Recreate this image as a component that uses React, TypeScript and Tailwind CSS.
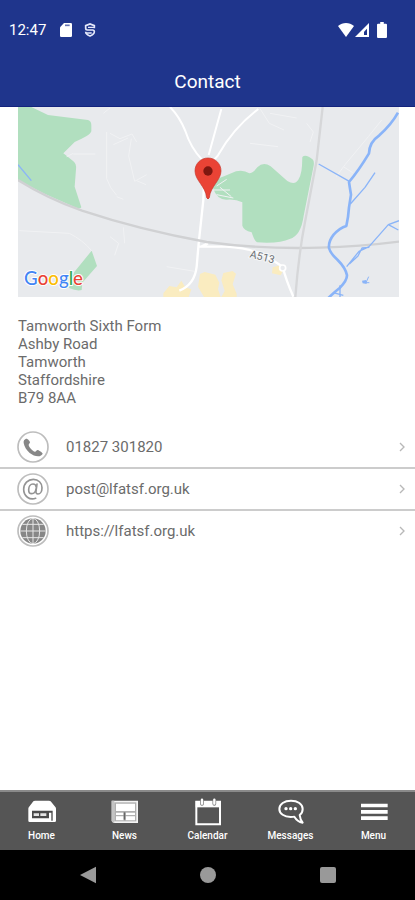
import type { ReactNode } from "react";

const ADDRESS = ["Tamworth Sixth Form", "Ashby Road", "Tamworth", "Staffordshire", "B79 8AA"];

interface ContactItem {
  label: string;
  href: string;
  icon: ReactNode;
}

interface TabItem {
  label: string;
  icon: ReactNode;
}

function PhoneIcon() {
  return (
    <svg viewBox="0 0 96 96" className="size-8 shrink-0" aria-hidden="true">
      <circle cx="48" cy="48" r="45" fill="#fff" stroke="#bdbdbd" strokeWidth="5" />
      <path
        d="M27 23c-5 2-8 6-7 13 2 12 9 22 18 30 8 6 17 10 25 10 7 0 12-4 14-8 0-3-12-11-15-11-3 0-5 5-8 5-7-1-18-13-19-20 0-3 4-5 4-8 0-4-7-12-12-11Z"
        fill="#878787"
      />
    </svg>
  );
}

function EmailIcon() {
  return (
    <svg viewBox="0 0 96 96" className="size-8 shrink-0" aria-hidden="true">
      <circle cx="48" cy="48" r="45" fill="#fff" stroke="#bdbdbd" strokeWidth="5" />
      <g fill="none" stroke="#949494" strokeWidth="5" strokeLinecap="round">
        <path d="M56 76C38 82 20 70 20 49c0-18 13-30 29-30 15 0 26 11 26 25 0 12-6 19-12 19-5 0-7-4-6-9l3-21" />
        <path d="M58 42c-1-6-5-9-10-9-8 0-13 8-13 17 0 8 3 12 9 12 7 0 12-7 13-14" />
      </g>
    </svg>
  );
}

function GlobeIcon() {
  return (
    <svg viewBox="0 0 96 96" className="size-8 shrink-0" aria-hidden="true">
      <circle cx="48" cy="48" r="45" fill="#fff" stroke="#bdbdbd" strokeWidth="5" />
      <circle cx="48" cy="48" r="38" fill="#878787" />
      <g fill="none" stroke="#e6e6e6" strokeWidth="3">
        <path d="M48 10v76M10 48h76M16 28h64M16 68h64" />
        <ellipse cx="48" cy="48" rx="20" ry="38" />
      </g>
    </svg>
  );
}

function HomeIcon() {
  return (
    <svg viewBox="83 54 84 84" className="size-7" aria-hidden="true">
      <path d="M104 62h42q3 0 5 2l14 17q2 2 2 5v36q0 4-4 4H88q-4 0-4-4V86q0-3 2-5l13-17q2-2 5-2Z" fill="#fff" />
      <path d="M95 92h62v30h-4V98h-7v17H95Z" fill="#4a4a4a" />
      <path d="M100 100h16v8h-16zM120 100h18v8h-18z" fill="#e4e4e4" />
    </svg>
  );
}

function NewsIcon() {
  return (
    <svg viewBox="332 54 84 84" className="size-7" aria-hidden="true">
      <path d="M334 62h79v67h-74l-5-6Z" fill="#f4f4f4" />
      <path d="M334 62h8v67h-3l-5-6Z" fill="#c4c4c4" />
      <path d="M342 67h66v57h-66z" fill="#b0b0b0" />
      <path d="M347 71h57v22h-57zM347 98h23v7h-23zM347 109h23v12h-23zM376 98h28v7h-28zM376 109h28v12h-28z" fill="#fff" />
      <path d="M370 97h5v22h-5z" fill="#666" />
    </svg>
  );
}

function CalendarIcon() {
  return (
    <svg viewBox="581 54 84 84" className="size-7" aria-hidden="true">
      <path d="M588 65h71v68h-71z" fill="none" stroke="#fff" strokeWidth="6" />
      <path d="M586 63h76v19h-76z" fill="#fff" />
      <g strokeLinecap="round">
        <path d="M605 62v10M642 62v10" stroke="#777" strokeWidth="11" />
        <path d="M605 59v12M642 59v12" stroke="#fff" strokeWidth="7" />
      </g>
    </svg>
  );
}

function MessagesIcon() {
  return (
    <svg viewBox="215 54 84 84" className="size-7" aria-hidden="true">
      <path
        d="M257 62c-20 0-35 10-35 25 0 14 15 24 34 24 4 0 8 0 11-1 6 10 15 16 25 18-5-6-8-14-9-23 6-4 9-11 9-18 0-15-15-25-35-25Z"
        fill="none"
        stroke="#fff"
        strokeWidth="6"
        strokeLinejoin="round"
      />
      <g fill="#fff">
        <circle cx="242" cy="86" r="5" />
        <circle cx="256" cy="86" r="5" />
        <circle cx="270" cy="86" r="5" />
      </g>
    </svg>
  );
}

function MenuIcon() {
  return (
    <svg viewBox="464 54 84 84" className="size-7" aria-hidden="true">
      <path d="M467 71h80v11h-80zM467 90h80v11h-80zM467 109h80v11h-80z" fill="#fff" />
    </svg>
  );
}

const CONTACTS: ContactItem[] = [
  { label: "01827 301820", href: "tel:01827301820", icon: <PhoneIcon /> },
  { label: "post@lfatsf.org.uk", href: "mailto:post@lfatsf.org.uk", icon: <EmailIcon /> },
  { label: "https://lfatsf.org.uk", href: "https://lfatsf.org.uk", icon: <GlobeIcon /> },
];

const TABS: TabItem[] = [
  { label: "Home", icon: <HomeIcon /> },
  { label: "News", icon: <NewsIcon /> },
  { label: "Calendar", icon: <CalendarIcon /> },
  { label: "Messages", icon: <MessagesIcon /> },
  { label: "Menu", icon: <MenuIcon /> },
];

function StatusBar() {
  return (
    <div className="flex h-15 items-center pr-7 pl-2 text-white">
      <span className="pl-px text-[15px]">12:47</span>
      {/* SD card */}
      <svg viewBox="0 0 36 42" className="ml-3.5 h-3.5 w-3" aria-hidden="true">
        <path d="M12 0h20q4 0 4 4v34q0 4-4 4H4q-4 0-4-4V13Z" fill="#fff" />
        <path d="M15 7h14" stroke="#6674b4" strokeWidth="5" />
      </svg>
      {/* Shield */}
      <svg viewBox="0 0 36 44" className="ml-3 h-4 w-3" fill="none" stroke="#e4e8fa" strokeWidth="5" aria-hidden="true">
        <path d="M31 17V9L18 4 5 9v8q0 5 5 5h16q5 0 5 5c0 6-6 10-13 13C11 37 5 33 5 27" />
        <path d="M12 14h19M5 31h18" strokeWidth="4" />
      </svg>
      <svg viewBox="0 0 48 42" className="ml-auto h-3.5 w-4" aria-hidden="true">
        <path d="M0 9C14-3 34-3 48 9L24 42Z" fill="#fff" />
      </svg>
      <svg viewBox="0 0 42 42" className="ml-px h-3.5 w-3.5" aria-hidden="true">
        <path d="M42 0v42H0Z" fill="#fff" />
        <path d="M36 17v19h-9V26Z" fill="#1f358c" />
      </svg>
      <svg viewBox="0 0 28 45" className="ml-2 h-4 w-2.5" aria-hidden="true">
        <path d="M9 0h10v5h6q3 0 3 3v34q0 3-3 3H3q-3 0-3-3V8q0-3 3-3h6Z" fill="#fff" />
      </svg>
    </div>
  );
}

function LocationMap() {
  return (
    <svg viewBox="54 21 1143 570" className="block w-full" role="img" aria-label="Map of Ashby Road, Tamworth">
      <path d="M54 21h1143v570H54z" fill="#e8eaed" />

      {/* Parks */}
      <g fill="#b1dfbf">
        <path d="M54 21h40l50 24 120 15q10 3 10 16v18q-3 12-50 32l-34 34 30 24q10 8 8 24l-4 52 20 62q-4 6-22-2L130 280 54 240Z" />
        <path d="M275 452l16 46-44 50-2 22q-14 4-38-6l16-48Z" />
        <path d="M638 262q10-28 36-34l34-14q22-6 40 6 10 0 24-18 18-18 40-3l50 44q16 10 26 4 16-14 18-50l1-26q10-10 32 8 4 6 2 18l-30 150q-8 60-42 70-28 14-98 10-8-4-16-30-24-6-28-20v-70q-20-10-46-8-30 2-43-37Z" />
      </g>

      {/* Built-up areas */}
      <g fill="#faecc0">
        <path d="M490 580l18-22 22 4 14-20 12 20 18 6-8 23h-76ZM594 560l6-38 14-6 32 8 12 24-4 20 8 23h-50ZM664 591l10-18-10-32 6-22 28-6 10 8-10 32 12 28v10Z" />
        <path d="M818 502l22-6 10 14-8 16-26-6Z" />
      </g>

      {/* Minor streets */}
      <g fill="none" stroke="#f1f2f4" strokeWidth="3">
        <path d="M320 96v140q10 30 30 50M330 100l30 16 36-14 14 24M394 116l-8 52 18 76 36-20M340 134l44-20M350 290l20 8M220 162h66M410 242l28 12M200 170l20-10" />
        <path d="M58 392l150 8q40 20 67 52M330 410l26 20-12 36M370 382l4 48M500 500l84 14M330 24l-20 16" />
        <path d="M780 26l28 44 44 20M750 130l84 10M920 70l20 26-10 30M810 40l80 14" />
        <path d="M1145 60l-40 50-70 84-26 36M1030 200l28 18M640 270h50M650 258l30-20M650 284l50 10M660 262l34 28" />
      </g>
      <path d="M510 21q28 28 46 72 16 50 50 86M664 27l-38 138M775 27Q700 84 654 166l-44 50" fill="none" stroke="#fff" strokeWidth="6" />
      <path d="M614 190l-4 110-14 130-6 70q-6 54-52 72M598 440h80q80 4 130 34l40 26q10 40 32 90M604 440l20-10" fill="none" stroke="#fff" strokeWidth="7" />
      <circle cx="848" cy="504" r="9" fill="#e8eaed" stroke="#fff" strokeWidth="5" />

      {/* Railway lines */}
      <path d="M54 240Q140 294 246 332 420 390 620 426 780 448 960 443 1080 440 1197 425" fill="none" stroke="#d0d1d3" strokeWidth="7" />
      <path d="M968 21l-18 160-34 180q-20 100-30 230" fill="none" stroke="#d6d7d9" strokeWidth="7" />

      {/* Waterways */}
      <g fill="none" stroke="#8ab4f8" strokeLinejoin="round">
        <path d="M1194 38q-20 36-56 68-30 20-31 54-30 50-60 86 2 14 6 38l-6 38q-2 30-8 56-20 6-38 26-16 20-14 40 4 16 26 36 24 24 28 46 0 16-22 38-16 12-40 36l-14 10" strokeWidth="8" />
        <path d="M956 192l92 52M1125 218l-30 44-44 50M1040 500l37-46 30-14 58-66 32-12M1048 492l26-24 12-24 22-2M1165 374l30 16M1020 556v35M1000 578l30 8" strokeWidth="4" />
        <path d="M54 194l40 48" strokeWidth="4" />
        <path d="M1106 530l-8 18h10" strokeWidth="3" />
      </g>
      <path d="M1086 542l12-2 2 12-12-2Z" fill="#8ab4f8" />

      <text
        x="748"
        y="472"
        transform="rotate(14 748 472)"
        fill="#6b6f74"
        stroke="#f5f6f7"
        strokeWidth="6"
        paintOrder="stroke"
        className="font-[Roboto,sans-serif] text-[32px]"
      >
        A513
      </text>

      {/* Pin */}
      <path d="M624 174c-22 0-39 17-39 39 0 28 32 46 35 80q4 8 8 0c3-34 35-52 35-80 0-22-17-39-39-39Z" fill="#ea4335" stroke="#c5352a" strokeWidth="2" />
      <circle cx="624" cy="213" r="14" fill="#7f1710" />

      <text
        x="72"
        y="555"
        stroke="#fff"
        strokeWidth="6"
        strokeLinejoin="round"
        paintOrder="stroke"
        className="font-[Lato,sans-serif] text-[56px] font-medium"
      >
        <tspan fill="#4285f4">G</tspan>
        <tspan fill="#ea4335">o</tspan>
        <tspan fill="#fbbc04">o</tspan>
        <tspan fill="#4285f4">g</tspan>
        <tspan fill="#34a853">l</tspan>
        <tspan fill="#ea4335">e</tspan>
      </text>
    </svg>
  );
}

function ContactRow({ item }: { item: ContactItem }) {
  return (
    <li className="border-b-2 border-[#cccccc] last:border-b-0">
      <a href={item.href} className="flex h-10 items-center pr-2 pl-[17px]">
        {item.icon}
        <span className="ml-[17px] flex-1 text-[15px]">{item.label}</span>
        <svg viewBox="0 0 18 30" className="mr-0.5 h-2.5 w-1.5" aria-hidden="true">
          <path d="M3 3l12 12L3 27" fill="none" stroke="#b8b8b8" strokeWidth="4" />
        </svg>
      </a>
    </li>
  );
}

export default function App() {
  return (
    <div className="flex min-h-screen flex-col bg-white font-[Roboto,sans-serif] text-[#6b6b6b]">
      <header className="bg-[#1f358c]">
        <StatusBar />
        <h1 className="border-b border-[#13237d] pt-2 pb-2.5 text-center text-[19px] leading-7 text-white">
          Contact
        </h1>
      </header>

      <main className="flex-1">
        <div className="pr-4 pl-[18px]">
          <LocationMap />
          <address className="mt-5 text-[15px] leading-[18px] not-italic">
            {ADDRESS.map((line) => (
              <div key={line}>{line}</div>
            ))}
          </address>
        </div>
        <ul className="mt-5">
          {CONTACTS.map((item) => (
            <ContactRow key={item.label} item={item} />
          ))}
        </ul>
      </main>

      <nav className="grid grid-cols-5 border-t-2 border-[#8a8a8a] bg-[#555555]">
        {TABS.map((tab) => (
          <button key={tab.label} type="button" className="flex flex-col items-center pt-1.5 pb-1.5 text-white">
            {tab.icon}
            <span className="mt-0.5 text-[10px] leading-4 font-medium">{tab.label}</span>
          </button>
        ))}
      </nav>

      {/* System navigation */}
      <div className="grid h-[50px] grid-cols-[1fr_auto_1fr] items-center bg-black">
        <button type="button" aria-label="Back" className="mr-26 justify-self-end">
          <svg viewBox="0 0 48 54" className="h-4.5 w-4">
            <path d="M48 2v50L0 27Z" fill="#999" />
          </svg>
        </button>
        <button type="button" aria-label="Home" className="size-4 rounded-full bg-[#999999]" />
        <button type="button" aria-label="Recent apps" className="ml-26 size-4 rounded-xs bg-[#999999]" />
      </div>
    </div>
  );
}
